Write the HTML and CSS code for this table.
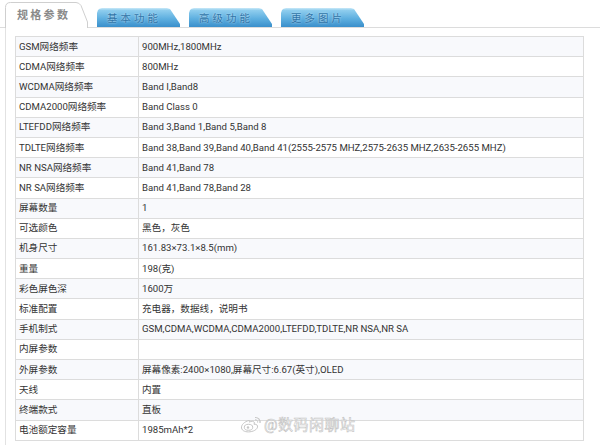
FILE: index.html
```html
<!DOCTYPE html>
<html lang="zh">
<head>
<meta charset="utf-8">
<title>规格参数</title>
<link rel="stylesheet" href="styles.css">
</head>
<body>
<div class="page">
  <div class="tabs">
    <div class="tab tab-active">
      <svg class="tab-shape" width="83" height="26" viewBox="0 0 83 26"><path d="M0.5 26 V5.5 Q0.5 0.5 5.5 0.5 H71 Q74 0.5 76 3.5 L82.5 20 V26" fill="#fff" stroke="#cfcfcf"/></svg>
      <span class="tab-label">规格参数</span>
    </div>
    <div class="tab tab-blue"><span class="tab-label">基本功能</span></div>
    <div class="tab tab-blue"><span class="tab-label">高级功能</span></div>
    <div class="tab tab-blue"><span class="tab-label">更多图片</span></div>
  </div>
  <div class="panel">
    <table class="spec">
      <colgroup><col class="col-key"><col></colgroup>
      <tbody>
        <tr><td>GSM网络频率</td><td>900MHz,1800MHz</td></tr>
        <tr><td>CDMA网络频率</td><td>800MHz</td></tr>
        <tr><td>WCDMA网络频率</td><td>Band I,Band8</td></tr>
        <tr><td>CDMA2000网络频率</td><td>Band Class 0</td></tr>
        <tr><td>LTEFDD网络频率</td><td>Band 3,Band 1,Band 5,Band 8</td></tr>
        <tr><td>TDLTE网络频率</td><td>Band 38,Band 39,Band 40,Band 41(2555-2575 MHZ,2575-2635 MHZ,2635-2655 MHZ)</td></tr>
        <tr><td>NR NSA网络频率</td><td>Band 41,Band 78</td></tr>
        <tr><td>NR SA网络频率</td><td>Band 41,Band 78,Band 28</td></tr>
        <tr><td>屏幕数量</td><td>1</td></tr>
        <tr><td>可选颜色</td><td>黑色，灰色</td></tr>
        <tr><td>机身尺寸</td><td>161.83×73.1×8.5(mm)</td></tr>
        <tr><td>重量</td><td>198(克)</td></tr>
        <tr><td>彩色屏色深</td><td>1600万</td></tr>
        <tr><td>标准配置</td><td>充电器，数据线，说明书</td></tr>
        <tr><td>手机制式</td><td>GSM,CDMA,WCDMA,CDMA2000,LTEFDD,TDLTE,NR NSA,NR SA</td></tr>
        <tr><td>内屏参数</td><td></td></tr>
        <tr><td>外屏参数</td><td>屏幕像素:2400×1080,屏幕尺寸:6.67(英寸),OLED</td></tr>
        <tr><td>天线</td><td>内置</td></tr>
        <tr><td>终端款式</td><td>直板</td></tr>
        <tr><td>电池额定容量</td><td>1985mAh*2</td></tr>
      </tbody>
    </table>
    <div class="watermark">
      <svg class="wm-logo" width="22" height="18" viewBox="0 0 22 18">
        <path d="M9 5.5 C4.5 6.5 1 10 1.5 13 C2 16 6 17.3 10 16.8 C15 16.2 18 13.5 17.5 11 C17.2 9.5 15.5 9 14 9.3 C14.8 7.5 14.2 6 12.2 6.2 C11 6.3 10 6.8 9.5 7.2 C10 5.8 10 5.2 9 5.5 Z" fill="#fff" stroke="#c6c6c6" stroke-width="1"/>
        <ellipse cx="8.5" cy="12.3" rx="4.2" ry="3" fill="none" stroke="#c6c6c6" stroke-width="1"/>
        <circle cx="8" cy="12.5" r="1.2" fill="#c6c6c6"/>
        <path d="M15 2.5 C18 2.3 20.5 4.5 20 8" fill="none" stroke="#c6c6c6" stroke-width="1.2"/>
        <path d="M15 4.8 C16.8 4.7 18 6 17.6 7.6" fill="none" stroke="#c6c6c6" stroke-width="1"/>
      </svg>
      <span class="wm-text">@数码闲聊站</span>
    </div>
  </div>
</div>
</body>
</html>
```

FILE: styles.css
```css
* { box-sizing: border-box; }

body {
  margin: 0;
  background: #fff;
  font-family: Roboto, "Noto Sans CJK SC", sans-serif;
  color: #333;
}

.page {
  position: relative;
  width: 600px;
  height: 445px;
  overflow: hidden;
}

/* ---------- tabs ---------- */
.tabs {
  display: flex;
  align-items: flex-end;
  gap: 9px;
  height: 28px;
  padding-left: 5px;
  border-bottom: 1px solid #dcdcdc;
}

.tab {
  position: relative;
  display: flex;
  align-items: center;
  flex: none;
}

.tab-active {
  width: 83px;
  height: 26px;
  margin-bottom: -1px;
  padding-left: 12px;
}

.tab-shape {
  position: absolute;
  left: 0;
  top: 0;
}

.tab-active .tab-label {
  position: relative;
  font-size: 11px;
  font-weight: bold;
  letter-spacing: 2.3px;
  color: #8a8a8a;
  margin-top: -2px;
}

.tab-blue {
  width: 83px;
  height: 19px;
  padding-left: 10px;
  background: linear-gradient(#c9e9f8 0, #8fcdee 12%, #5fb0e0 55%, #3a8fcb 100%);
  clip-path: polygon(0 5px, 1px 2px, 2.5px 0.7px, 5px 0, 70px 0, 73px 1px, 83px 16px, 83px 100%, 0 100%);
}

.tab-blue .tab-label {
  font-size: 10.5px;
  letter-spacing: 3px;
  color: #2f74a8;
  text-shadow: 0 0 2px rgba(255, 255, 255, 0.7);
}

/* ---------- panel & table ---------- */
.panel {
  position: relative;
  margin-left: 5px;
  padding: 8px 0 0 9px;
  height: 417px;
  border-left: 1px solid #e2e2e2;
}

.spec {
  width: 569px;
  table-layout: fixed;
  border-collapse: collapse;
  border: 1px solid #d6d6d6;
}

.col-key { width: 123px; }

.spec td {
  height: 20.2px;
  padding: 0 0 0 3px;
  border: 1px solid #dcdcdc;
  font-size: 9.6px;
  line-height: 12px;
  color: #333;
  white-space: nowrap;
  overflow: hidden;
}

.spec tr:nth-child(odd) td { background: #f8f9fc; }
.spec tr:nth-child(even) td { background: #fff; }

/* ---------- watermark ---------- */
.watermark {
  position: absolute;
  left: 234px;
  top: 385px;
  display: flex;
  align-items: center;
  gap: 2px;
}

.wm-text {
  font-size: 15px;
  letter-spacing: 0.5px;
  color: rgba(255, 255, 255, 0.85);
  -webkit-text-stroke: 0.6px #c4c4c4;
}
```
